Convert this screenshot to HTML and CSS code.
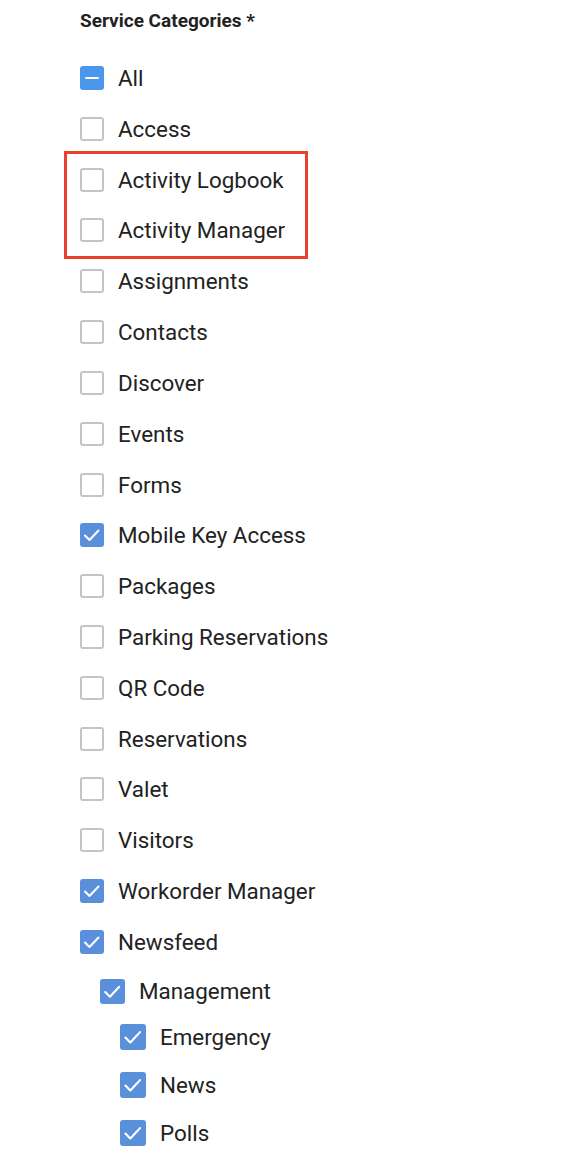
FILE: index.html
```html
<!DOCTYPE html>
<html lang="en">
<head>
   <meta charset="UTF-8">
   <meta name="viewport" content="width=device-width, initial-scale=1.0">
   <title>Service Categories</title>
   <link rel="stylesheet" href="styles.css">
</head>
<body>

   <div class="field">
      <div class="field-label">Service Categories *</div>

      <ul class="tree">
         <li class="row"><span class="box partial"><svg viewBox="0 0 24 24"><path d="M6 12h12"/></svg></span>All</li>
         <li class="row"><span class="box"></span>Access</li>
      </ul>

      <!-- highlighted items -->
      <div class="highlight">
         <ul class="tree">
            <li class="row"><span class="box"></span>Activity Logbook</li>
            <li class="row"><span class="box"></span>Activity Manager</li>
         </ul>
      </div>

      <ul class="tree">
         <li class="row"><span class="box"></span>Assignments</li>
         <li class="row"><span class="box"></span>Contacts</li>
         <li class="row"><span class="box"></span>Discover</li>
         <li class="row"><span class="box"></span>Events</li>
         <li class="row"><span class="box"></span>Forms</li>
         <li class="row"><span class="box checked"><svg viewBox="0 0 24 24"><path d="M5 12.5l4.5 4.5 9-9.5"/></svg></span>Mobile Key Access</li>
         <li class="row"><span class="box"></span>Packages</li>
         <li class="row"><span class="box"></span>Parking Reservations</li>
         <li class="row"><span class="box"></span>QR Code</li>
         <li class="row"><span class="box"></span>Reservations</li>
         <li class="row"><span class="box"></span>Valet</li>
         <li class="row"><span class="box"></span>Visitors</li>
         <li class="row"><span class="box checked"><svg viewBox="0 0 24 24"><path d="M5 12.5l4.5 4.5 9-9.5"/></svg></span>Workorder Manager</li>
         <li class="row"><span class="box checked"><svg viewBox="0 0 24 24"><path d="M5 12.5l4.5 4.5 9-9.5"/></svg></span>Newsfeed</li>
      </ul>

      <ul class="tree sub">
         <li class="row sub-row"><span class="box checked big"><svg viewBox="0 0 24 24"><path d="M5 12.5l4.5 4.5 9-9.5"/></svg></span>Management</li>
         <li>
            <ul class="tree sub sub-2">
               <li class="row sub-row"><span class="box checked bigger"><svg viewBox="0 0 24 24"><path d="M5 12.5l4.5 4.5 9-9.5"/></svg></span>Emergency</li>
               <li class="row sub-row"><span class="box checked bigger"><svg viewBox="0 0 24 24"><path d="M5 12.5l4.5 4.5 9-9.5"/></svg></span>News</li>
               <li class="row sub-row"><span class="box checked bigger"><svg viewBox="0 0 24 24"><path d="M5 12.5l4.5 4.5 9-9.5"/></svg></span>Polls</li>
            </ul>
         </li>
      </ul>
   </div>

</body>
</html>
```

FILE: styles.css
```css
body {
   font-family: Roboto, "Helvetica Neue", Arial, sans-serif;
   background-color: #fff;
   color: #222;
   margin: 0;
   padding: 0 0 0 80px;
}

.field-label {
   font-size: 19px;
   font-weight: 700;
   height: 42px;
   line-height: 42px;
   margin-bottom: 10.6px;
   color: #222;
}

.tree {
   list-style: none;
   margin: 0;
   padding: 0;
}

.row {
   display: flex;
   align-items: center;
   gap: 14px;
   height: 50.82px;
   font-size: 22.4px;
   color: #222;
}

.highlight {
   margin-left: -16px;
   margin-right: auto;
   width: 225px;
   border: 3px solid #e8412c;
   padding: 0 0 0 13px;
   margin-top: -3px;
   margin-bottom: -3px;
}

.box {
   flex: none;
   width: 24px;
   height: 24px;
   box-sizing: border-box;
   border: 2px solid #c4c4c4;
   border-radius: 3px;
   background: #fff;
}

.box svg {
   display: block;
   width: 100%;
   height: 100%;
   fill: none;
   stroke: #fff;
   stroke-width: 2;
   stroke-linecap: round;
   stroke-linejoin: round;
}

.box.partial {
   border: none;
   background-color: #4a97ec;
}

.box.checked {
   border: none;
   background-color: #5a8fdc;
}

.box.big {
   width: 25px;
   height: 25px;
}

.box.bigger {
   width: 26px;
   height: 26px;
}

.sub {
   padding-left: 20px;
}

.sub-row {
   height: 48px;
}

.sub-2 {
   margin-top: -2px;
}
```
